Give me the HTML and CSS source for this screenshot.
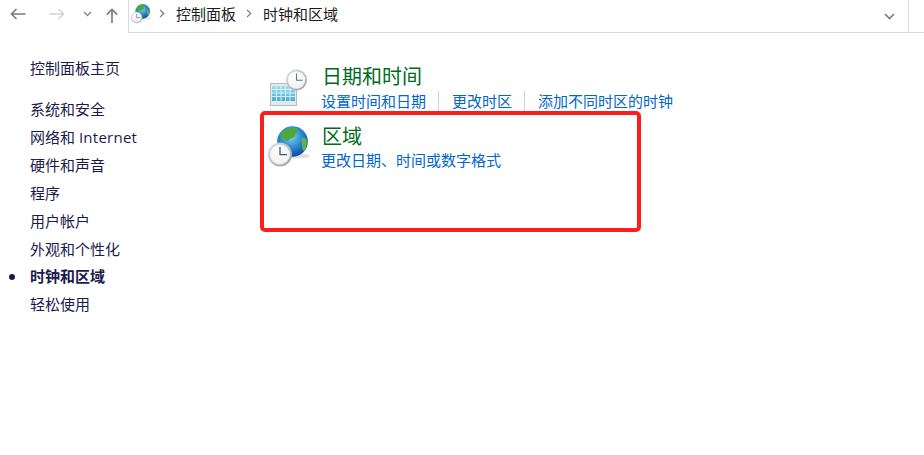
FILE: index.html
```html
<!DOCTYPE html>
<html lang="zh-CN">
<head>
<meta charset="utf-8">
<title>时钟和区域</title>
<link rel="stylesheet" href="styles.css">
</head>
<body>
<svg class="defs" width="0" height="0" aria-hidden="true">
  <defs>
    <radialGradient id="ocean" cx="0.45" cy="0.35" r="0.75">
      <stop offset="0" stop-color="#7fd0f2"/><stop offset="0.55" stop-color="#1f7fc9"/><stop offset="1" stop-color="#0f2f8f"/>
    </radialGradient>
    <radialGradient id="face" cx="0.4" cy="0.3" r="0.85">
      <stop offset="0" stop-color="#ffffff"/><stop offset="0.75" stop-color="#f0f2f4"/><stop offset="1" stop-color="#cfd5da"/>
    </radialGradient>
    <linearGradient id="rim" x1="0" y1="0" x2="1" y2="1">
      <stop offset="0" stop-color="#dfe3e7"/><stop offset="1" stop-color="#969fa7"/>
    </linearGradient>
    <linearGradient id="sheet" x1="0" y1="0" x2="0" y2="1">
      <stop offset="0" stop-color="#a5dcee"/><stop offset="1" stop-color="#46aed4"/>
    </linearGradient>
    <symbol id="globe-clock" viewBox="0 0 42 42">
      <ellipse cx="27" cy="30" rx="15" ry="2.500" fill="#000" opacity=".12"/>
      <circle cx="24.500" cy="15.500" r="15.300" fill="url(#ocean)"/>
      <path d="M14 6c4-4 11-5 15-3 2 1 1 3-1 4-1 1 0 3-2 4-2 2-4 1-5 3-1 1-3 1-4 0-1-2-3-1-4-2-1-2 0-4 1-6z" fill="#4fa83a"/>
      <path d="M34 12c2-1 4 0 5 3 0 4-1 8-3 10-2-1-2-4-2-6 0-2-1-5 0-7z" fill="#5cb544"/>
      <circle cx="12" cy="28.500" r="12" fill="url(#rim)"/>
      <circle cx="12" cy="28.500" r="10" fill="url(#face)"/>
      <path d="M12 21v7.700h7" fill="none" stroke="#4f5860" stroke-width="1.300"/>
    </symbol>
  </defs>
</svg>

<header class="toolbar">
  <div class="nav">
    <svg class="nav-back" width="16" height="12" viewBox="0 0 16 12"><path d="M15.500 6H1.500M6.500 1 1.500 6l5 5" fill="none" stroke="#7a7a7a" stroke-width="1.600"/></svg>
    <svg class="nav-forward" width="16" height="12" viewBox="0 0 16 12"><path d="M.5 6h14M9.500 1l5 5-5 5" fill="none" stroke="#d2d2d2" stroke-width="1.400"/></svg>
    <svg class="nav-drop" width="9" height="6" viewBox="0 0 9 6"><path d="m1 1 3.500 3.500L8 1" fill="none" stroke="#8a8a8a" stroke-width="1.500"/></svg>
    <svg class="nav-up" width="12" height="15" viewBox="0 0 12 15"><path d="M6 15V1.500M.8 6.700 6 1.500l5.200 5.200" fill="none" stroke="#7f7f7f" stroke-width="1.700"/></svg>
  </div>
  <div class="address">
    <svg class="addr-icon" width="20" height="20"><use href="#globe-clock"/></svg>
    <svg class="crumb-sep first" width="6" height="9" viewBox="0 0 6 9"><path d="m1 .8 3.700 3.700L1 8.200" fill="none" stroke="#777" stroke-width="1.200"/></svg>
    <span class="crumb">控制面板</span>
    <svg class="crumb-sep" width="6" height="9" viewBox="0 0 6 9"><path d="m1 .8 3.700 3.700L1 8.200" fill="none" stroke="#777" stroke-width="1.200"/></svg>
    <span class="crumb">时钟和区域</span>
    <div class="addr-end">
      <svg width="11" height="7" viewBox="0 0 11 7"><path d="m1 1 4.500 4.500L10 1" fill="none" stroke="#7a7a7a" stroke-width="1.600"/></svg>
    </div>
  </div>
</header>

<div class="page">
  <nav class="side">
    <a class="side-home">控制面板主页</a>
    <ul class="side-list">
      <li>系统和安全</li>
      <li>网络和 <span class="latin">Internet</span></li>
      <li>硬件和声音</li>
      <li>程序</li>
      <li>用户帐户</li>
      <li>外观和个性化</li>
      <li class="current">时钟和区域</li>
      <li class="last">轻松使用</li>
    </ul>
  </nav>
  <main class="content">
    <section class="item">
      <svg class="item-icon" width="40" height="40" viewBox="0 0 40 40">
        <rect x="2.500" y="16.500" width="26" height="22" fill="#e3e9ec" stroke="#b2bcc2"/>
        <rect x="4" y="19" width="23" height="15" fill="url(#sheet)"/>
        <path d="M8.500 19v15M13 19v15M17.500 19v15M22 19v15M4 22.500h23M4 26h23M4 29.500h23" stroke="#e8f6fb" stroke-width="1" opacity=".85"/>
        <circle cx="28.500" cy="13" r="10.500" fill="url(#rim)"/>
        <circle cx="28.500" cy="13" r="8.800" fill="url(#face)"/>
        <path d="M28.500 6.500v6.800h6" fill="none" stroke="#6b747c" stroke-width="1.100"/>
      </svg>
      <div class="item-body">
        <h2 class="item-title">日期和时间</h2>
        <p class="links"><a>设置时间和日期</a><a>更改时区</a><a>添加不同时区的时钟</a></p>
      </div>
    </section>
    <section class="item">
      <svg class="item-icon" width="42" height="42"><use href="#globe-clock"/></svg>
      <div class="item-body">
        <h2 class="item-title">区域</h2>
        <p class="links"><a>更改日期、时间或数字格式</a></p>
      </div>
    </section>
    <div class="highlight"></div>
  </main>
</div>
</body>
</html>
```
FILE: styles.css
```css
* { box-sizing: border-box; }
html, body { margin: 0; height: 100%; }
body {
  background: #fff;
  font-family: "Open Sans", "Noto Sans CJK SC", sans-serif;
  overflow: hidden;
}
.defs { position: absolute; }

.toolbar { display: flex; height: 33px; }
.nav { display: flex; align-items: flex-start; width: 128px; flex: none; }
.nav-back { margin: 8px 0 0 10px; }
.nav-forward { margin: 8px 0 0 23px; }
.nav-drop { margin: 11px 0 0 18px; }
.nav-up { margin: 8px 0 0 14px; }

.address {
  flex: 1;
  display: flex;
  align-items: flex-start;
  border-left: 1px solid #d9d9d9;
  border-bottom: 1px solid #d9d9d9;
}
.addr-icon { margin: 4px 0 0 2px; }
.crumb-sep { margin: 9px 11px 0 10px; }
.crumb-sep.first { margin-left: 8px; margin-right: 11px; }
.crumb { font-size: 15px; line-height: 20px; color: #1a1a1a; margin-top: 4px; }
.addr-end {
  margin-left: auto;
  width: 40px;
  height: 32px;
  display: flex;
  align-items: center;
  position: relative;
}
.addr-end::after {
  content: "";
  position: absolute;
  left: 24px;
  top: 0;
  bottom: 0;
  border-left: 1px solid #d9d9d9;
}

.page { display: flex; }
.side { width: 260px; flex: none; padding: 21px 0 0 30px; color: #1b1b4b; font-size: 15px; }
.side-home { display: block; height: 28px; line-height: 28px; }
.side-list { list-style: none; margin: 13px 0 0; padding: 0; }
.side-list li { height: 28px; line-height: 28px; position: relative; }
.side-list .latin { letter-spacing: .25px; }
.side-list .current, .side-list .last { line-height: 26px; }
.current { font-weight: 700; }
.current::before {
  content: "";
  position: absolute;
  left: -21px;
  top: 11px;
  width: 6px;
  height: 6px;
  border-radius: 50%;
  background: #1b1b4b;
}

.content { position: relative; flex: 1; padding-top: 30px; }
.item { display: flex; height: 60px; }
.item-icon { flex: none; margin: 4px 0 0 8px; }
.item + .item { margin-top: -1px; }
.item + .item .item-icon { margin: 4px 0 0 8px; }
.item-body { margin-left: 13px; }
.item + .item .item-body { margin-left: 11px; }
.item-title {
  margin: 0 0 0 1px;
  height: 28px;
  font-size: 20px;
  font-weight: 400;
  line-height: 28px;
  color: #006a20;
}
.item + .item .item-title { margin-top: 1px; height: 27px; }
.links { margin: 0; font-size: 15px; line-height: 20px; color: #0066cc; white-space: nowrap; display: flex; }
.links a + a { margin-left: 12px; padding-left: 13px; border-left: 1px solid #d0d0d0; }

.highlight {
  position: absolute;
  left: 0;
  top: 78px;
  width: 381px;
  height: 121px;
  border: 4px solid #fb1f1b;
  border-radius: 5px;
}
```
